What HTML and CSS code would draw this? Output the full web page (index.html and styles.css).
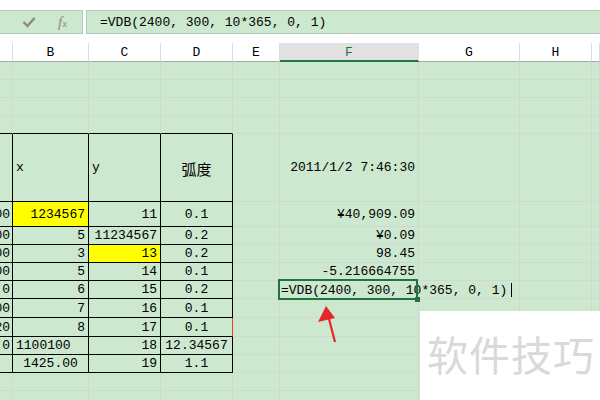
FILE: index.html
```html
<!DOCTYPE html>
<html lang="zh-CN">
<head>
<meta charset="UTF-8">
<title>VDB</title>
<link rel="stylesheet" href="styles.css">
</head>
<body>
<div class="wrap">
    <div class="topbar"></div>

    <div class="fbar">
        <div class="fbox tools">
            <svg class="ok" width="14" height="12" viewBox="0 0 14 12"><polyline points="1.5,6 5.5,10 12.5,2" fill="none" stroke="#8a8a8a" stroke-width="2.4"/></svg>
            <span class="fx">f<i>x</i></span>
        </div>
        <div class="fbox input">=VDB(2400, 300, 10*365, 0, 1)</div>
    </div>

    <div class="gap"></div>

    <div class="sheet">
        <!-- column headers -->
        <div class="h"></div><div class="h">B</div><div class="h">C</div><div class="h">D</div><div class="h">E</div><div class="h on">F</div><div class="h">G</div><div class="h">H</div><div class="h"></div>

        <!-- empty rows above the table -->
        <div></div><div></div><div></div><div></div><div></div><div></div><div></div><div></div><div></div>
        <div></div><div></div><div></div><div></div><div></div><div></div><div></div><div></div><div></div>
        <div></div><div></div><div></div><div></div><div></div><div></div><div></div><div></div><div></div>
        <div class="tt"></div><div class="tt"></div><div class="tt"></div><div class="tt"></div><div></div><div></div><div></div><div></div><div></div>

        <!-- table -->
        <div class="t"></div><div class="t l">x</div><div class="t l">y</div><div class="t m cjk">弧度</div><div></div><div class="r">2011/1/2 7:46:30</div><div></div><div></div><div></div>
        <div class="t a">100</div><div class="t r yel">1234567</div><div class="t r">11</div><div class="t m">0.1</div><div></div><div class="r">¥40,909.09</div><div></div><div></div><div></div>
        <div class="t a">100</div><div class="t r">5</div><div class="t r">11234567</div><div class="t m">0.2</div><div></div><div class="r">¥0.09</div><div></div><div></div><div></div>
        <div class="t a">100</div><div class="t r">3</div><div class="t r yel">13</div><div class="t m">0.2</div><div></div><div class="r">98.45</div><div></div><div></div><div></div>
        <div class="t a">100</div><div class="t r">5</div><div class="t r">14</div><div class="t m">0.1</div><div></div><div class="r">-5.216664755</div><div></div><div></div><div></div>
        <div class="t a">1.0</div><div class="t r">6</div><div class="t r">15</div><div class="t m">0.2</div><div></div>
        <div class="active">
            <div class="edit">=VDB(2400, 300, 10*365, 0, 1)<span class="caret"></span></div>
            <div class="sel"><span class="handle"></span></div>
        </div>
        <div></div><div></div><div></div>
        <div class="t a">100</div><div class="t r">7</div><div class="t r">16</div><div class="t m">0.1</div><div></div><div></div><div></div><div></div><div></div>
        <div class="t a">120</div><div class="t r">8</div><div class="t r">17</div><div class="t m red">0.1</div><div></div><div></div><div></div><div></div><div></div>
        <div class="t a">1.0</div><div class="t l">1100100</div><div class="t r">18</div><div class="t m">12.34567</div><div></div><div></div><div></div><div></div><div></div>
        <div class="t"></div><div class="t m">1425.00</div><div class="t r">19</div><div class="t m">1.1</div><div></div><div></div><div></div><div></div><div></div>

        <div></div><div></div><div></div><div></div><div></div><div></div><div></div><div></div><div></div>
        <div></div><div></div><div></div><div></div><div></div><div></div><div></div><div></div><div></div>
    </div>

    <svg class="arrow" width="30" height="44" viewBox="0 0 30 44">
        <line x1="16" y1="14" x2="22" y2="37" stroke="#e5262b" stroke-width="2.2"/>
        <polygon points="13,1 5,17 22,13" fill="#e5262b"/>
    </svg>

    <div class="mark">软件技巧</div>
</div>
</body>
</html>
```

FILE: styles.css
```css
body { margin: 0; background: #fff; font-family: "Liberation Mono", monospace; font-size: 13px; color: #000; overflow: hidden; }
.wrap { position: relative; width: 600px; height: 400px; overflow: hidden; }
.topbar { height: 10px; background: #fff; }
.gap { height: 9px; background: #fff; }

.fbar { display: flex; height: 24px; gap: 3px; }
.fbox { box-sizing: border-box; height: 24px; background: #cce8cf; border: 1px solid #b4c8b6; display: flex; align-items: center; }
.tools { width: 83px; border-left: none; padding-left: 22px; gap: 22px; }
.fx { font-family: "Liberation Serif", serif; font-style: italic; color: #8a8a8a; font-size: 15px; }
.fx i { font-size: 11px; }
.input { flex: 1; padding-left: 13px; border-right: none; }

.sheet {
    display: grid;
    grid-template-columns: 13px 76px 72px 72px 47px 139px 101px 72px 8px;
    grid-template-rows: 19px 18px 18px 18px 18px 68px 25px 18px 18px 18px 18px 19px 19px 18px 18px 18px 18px;
    background: #cce8cf;
}
.sheet > div {
    box-sizing: border-box;
    border-right: 1px solid #d3d6d3;
    border-bottom: 1px solid #d3d6d3;
    display: flex;
    align-items: center;
    white-space: nowrap;
}

.sheet > .h { background: #fff; justify-content: center; border-right-color: #dedede; border-bottom-color: #a8a8a8; padding-top: 1px; }
.sheet > .h.on { background: #e1e1e1; color: #217346; border-bottom: 2px solid #217346; }

.sheet > .tt { border-bottom-color: #000; }
.sheet > .t { border-right-color: #000; border-bottom-color: #000; }
.sheet > .red { border-right-color: #e8413a; }

.l { padding-left: 3px; }
.r { justify-content: flex-end; padding-right: 3px; }
.m { justify-content: center; }
.a { justify-content: flex-end; padding-right: 2px; overflow: hidden; }
.yel { background: #ffff00; }
.cjk { font-family: "Noto Sans CJK SC", sans-serif; font-size: 15px; padding-top: 2px; }

.active { position: relative; overflow: visible; z-index: 2; }
.edit { position: absolute; left: 1px; top: 0; height: 18px; display: flex; align-items: center; }
.caret { display: inline-block; width: 1px; height: 14px; background: #000; margin-left: 4px; }
.sel { position: absolute; left: -2px; top: -2px; right: 0; bottom: -2px; border: 2px solid #217346; }
.handle { position: absolute; right: -4px; bottom: -4px; width: 5px; height: 5px; background: #217346; }

.arrow { position: absolute; left: 313px; top: 305px; }
.mark {
    position: absolute; left: 420px; top: 311px; width: 180px; height: 89px;
    background: #fff; color: #d9d9d9;
    font-family: "Noto Sans CJK SC", sans-serif; font-size: 41px;
    padding: 12px 0 0 7px; box-sizing: border-box; letter-spacing: 1px;
}
```
